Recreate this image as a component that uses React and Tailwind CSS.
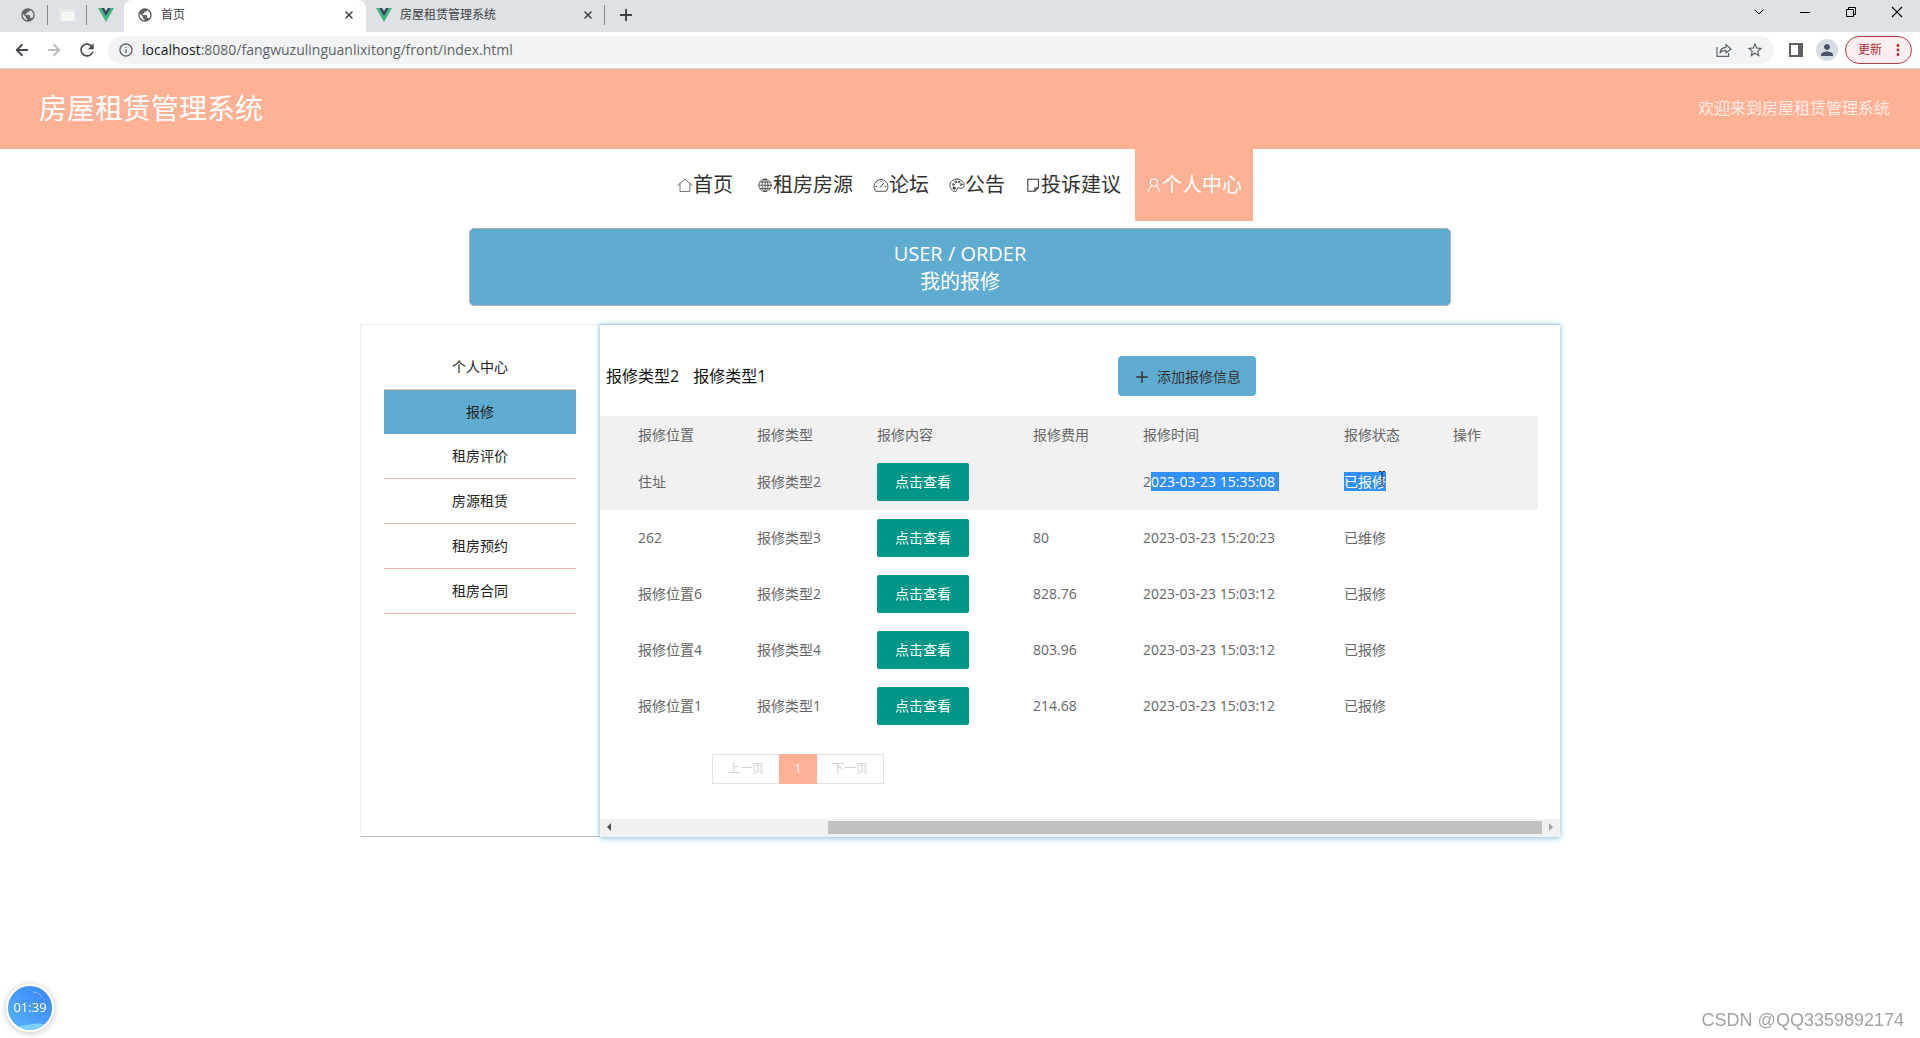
import React from 'react';
import { ArrowLeft, ArrowRight, ChevronDown, Plus, X } from 'lucide-react';
import { MdPublic, MdRefresh, MdStarOutline, MdPerson, MdMoreVert, MdInfoOutline } from 'react-icons/md';

const menu = ['个人中心', '报修', '租房评价', '房源租赁', '租房预约', '租房合同'];

const rows = [
  { place: '住址', type: '报修类型2', cost: '', time: '2023-03-23 15:35:08', status: '已报修', selected: true },
  { place: '262', type: '报修类型3', cost: '80', time: '2023-03-23 15:20:23', status: '已维修' },
  { place: '报修位置6', type: '报修类型2', cost: '828.76', time: '2023-03-23 15:03:12', status: '已报修' },
  { place: '报修位置4', type: '报修类型4', cost: '803.96', time: '2023-03-23 15:03:12', status: '已报修' },
  { place: '报修位置1', type: '报修类型1', cost: '214.68', time: '2023-03-23 15:03:12', status: '已报修' },
];

function NavIcon({ children }) {
  return (
    <svg className="w-4 h-4 shrink-0" viewBox="0 0 17 17" fill="none" stroke="currentColor" strokeWidth="0.9" strokeLinejoin="round" strokeLinecap="round">
      {children}
    </svg>
  );
}

const navItems = [
  {
    label: '首页',
    icon: (
      <g strokeWidth="0.7">
        <path d="M0.8 9 8.4 2.4 16 9" />
        <path d="M3.2 7v8.400h10.400V7" />
      </g>
    ),
  },
  {
    label: '租房房源',
    icon: (
      <g strokeWidth="0.8">
        <circle cx="8.5" cy="8.8" r="6.6" />
        <ellipse cx="8.5" cy="8.8" rx="3.2" ry="6.6" />
        <path d="M8.5 2.2v13.200M1.900 8.800h13.200M3.100 5.400h10.800M3.100 12.200h10.800" />
      </g>
    ),
  },
  {
    label: '论坛',
    icon: (
      <g>
        <path d="M2.600 14.800A7.500 7.500 0 1 1 14.400 14.800Z" />
        <path d="M7.800 10.800 11.400 6.400M2.800 10h1M8.500 4.200v.6M13 10h1M4.600 6l.5.5" />
      </g>
    ),
  },
  {
    label: '公告',
    icon: (
      <g>
        <path d="M8.600 2.200C4.400 2.200 1 5 1 8.800S3.800 15.400 6.400 15.400c2.400 0 1.600-2.600 2.600-3.600 1.600-1.400 3.400 1.200 5.600 0 1.200-.8 1.700-2 1.500-3.400-.4-3.400-3.500-6.200-7.500-6.200Z" />
        <circle cx="4.600" cy="8" r="1" />
        <circle cx="7" cy="5.200" r="1" />
        <circle cx="10.600" cy="5.200" r="1" />
        <circle cx="13" cy="8" r="1" />
        <circle cx="5.400" cy="11.800" r="1.200" fill="currentColor" />
      </g>
    ),
  },
  {
    label: '投诉建议',
    icon: (
      <g strokeWidth="1.100">
        <path d="M10.500 15.200H3V2.400h11.200v9.200l-3.700 3.600v-3.400h3.700" />
      </g>
    ),
  },
  {
    label: '个人中心',
    active: true,
    icon: (
      <g strokeWidth="1.100">
        <circle cx="8.500" cy="6" r="3.800" />
        <path d="M2.800 15.400c0-3 1.600-5 3.900-6M14.200 15.400c0-3-1.600-5-3.900-6" />
      </g>
    ),
  },
];

function VueLogo() {
  return (
    <svg className="w-4 h-4 shrink-0" viewBox="0 0 16 16">
      <path d="M0 1h3.2L8 9.4 12.8 1H16L8 15Z" fill="#41b883" />
      <path d="M3.2 1h3L8 4.2 9.8 1h3L8 9.4Z" fill="#35495e" />
    </svg>
  );
}

function TabBar() {
  return (
    <div className="flex h-8 items-center bg-[#dee1e6] pb-0.5 text-[#3c4043]">
      <div className="flex w-[47px] justify-end pr-[11px]"><MdPublic className="w-4 h-4 text-[#5f6368]" /></div>
      <div className="w-px h-5 bg-[#85898d]" />
      <div className="flex w-[38px] justify-center">
        <svg className="w-4 h-4" viewBox="0 0 16 16">
          <path d="M0 2h16v12H0z" fill="#f4f6f5" />
          <path d="M0 2h16v3H0z" fill="#e6ebe8" />
          <path d="M0 5h2v9H0z" fill="#dfe9e2" />
        </svg>
      </div>
      <div className="w-px h-5 bg-[#85898d]" />
      <div className="flex w-[37px] justify-center"><VueLogo /></div>
      <div className="flex h-8 w-[242px] self-start items-center gap-2 rounded-t-lg bg-white pb-0.5 pl-[13px] pr-[11px]">
        <MdPublic className="w-4 h-4 text-[#5f6368]" />
        <span className="flex-1 text-xs">首页</span>
        <button aria-label="关闭标签页"><X className="w-3 h-3" strokeWidth={3} /></button>
      </div>
      <div className="flex w-[238px] items-center gap-2 pl-[10px] pr-[10px]">
        <VueLogo />
        <span className="flex-1 text-xs">房屋租赁管理系统</span>
        <button aria-label="关闭标签页"><X className="w-3 h-3" strokeWidth={3} /></button>
      </div>
      <div className="w-px h-5 bg-[#85898d]" />
      <button className="ml-3" aria-label="新建标签页"><Plus className="w-[18px] h-[18px]" strokeWidth={2.5} /></button>
      <div className="ml-auto flex h-6 items-center self-start gap-[30px] pr-[15px] text-black">
        <button aria-label="搜索标签页"><ChevronDown className="w-4 h-4" strokeWidth={1.5} /></button>
        <button aria-label="最小化">
          <svg className="w-4 h-4" viewBox="0 0 16 16"><path d="M3 8.5h10" stroke="currentColor" /></svg>
        </button>
        <button aria-label="还原">
          <svg className="w-4 h-4" viewBox="0 0 16 16" fill="none" stroke="currentColor"><path d="M3.5 5.5h7v7h-7zM5.5 5.5v-2h7v7h-2" /></svg>
        </button>
        <button aria-label="关闭">
          <svg className="w-4 h-4" viewBox="0 0 16 16"><path d="m3 3 10 10M13 3 3 13" stroke="currentColor" strokeWidth="1.1" /></svg>
        </button>
      </div>
    </div>
  );
}

function Toolbar() {
  return (
    <div className="flex h-[37px] items-center border-b border-[#d5d5d8] bg-white pl-[13px] pr-2 text-[#5f6368]">
      <div className="flex gap-3.5">
        <button aria-label="后退"><ArrowLeft className="w-[18px] h-[18px] text-[#45484c]" strokeWidth={2.4} /></button>
        <button aria-label="前进"><ArrowRight className="w-[18px] h-[18px] text-[#b9bbbe]" strokeWidth={2.4} /></button>
        <button aria-label="重新加载"><MdRefresh className="w-5 h-5 text-[#45484c]" /></button>
      </div>
      <div className="ml-[11px] flex h-7 flex-1 items-center rounded-full bg-[#f1f3f4] px-2.5">
        <MdInfoOutline className="w-4 h-4" />
        <a href="#" className="ml-2 flex-1 text-sm text-[#5f6368]">
          <span className="text-[#202124]">localhost</span>:8080/fangwuzulinguanlixitong/front/index.html
        </a>
        <button aria-label="分享">
          <svg className="w-4 h-4" viewBox="0 0 16 16" fill="none" stroke="currentColor" strokeWidth="1.2" strokeLinejoin="round">
            <path d="M1 5v9.4h11.600V11" />
            <path d="M4 11c.4-3.600 2.800-5.400 6-5.600V2.600L15 7l-5 4V8.400C7.400 8.400 5.400 9.200 4 11Z" />
          </svg>
        </button>
        <button className="ml-3.5" aria-label="收藏"><MdStarOutline className="w-[18px] h-[18px]" /></button>
      </div>
      <button className="ml-3.5" aria-label="侧边栏">
        <svg className="w-4 h-4" viewBox="0 0 16 16" fill="none"><path d="M2 2h12v12H2z" stroke="currentColor" strokeWidth="2" /><path d="M10 2h5v12h-5z" fill="currentColor" /></svg>
      </button>
      <button className="ml-3 flex h-[22px] w-[22px] items-center justify-center rounded-full bg-[#d8dce3]" aria-label="用户">
        <MdPerson className="w-[18px] h-[18px] text-[#4b5468]" />
      </button>
      <button className="ml-[7px] flex h-7 w-[67px] items-center justify-between rounded-full border border-[#b3404a] bg-[#fceeee] pl-3 pr-1 text-xs text-[#b3303a]">
        更新
        <MdMoreVert className="w-[18px] h-[18px]" />
      </button>
    </div>
  );
}

function Sidebar() {
  return (
    <aside className="w-60 shrink-0 border border-[#f0f0f0] border-b-[#b9b9b9] px-[23px] pt-5">
      {menu.map((item) => (
        <a
          key={item}
          href="#"
          className={
            item === '报修'
              ? 'block h-11 bg-[#60acd0] text-center text-sm leading-[44px] text-[#222]'
              : 'block h-[45px] border-b border-[#eab5a5] text-center text-sm leading-[44px] text-[#222]'
          }
        >
          {item}
        </a>
      ))}
    </aside>
  );
}

function RepairTable() {
  return (
    <table className="w-full table-fixed text-left text-sm text-[#666]">
      <colgroup>
        <col className="w-[142px]" />
        <col className="w-[120px]" />
        <col className="w-[156px]" />
        <col className="w-[110px]" />
        <col className="w-[201px]" />
        <col className="w-[109px]" />
        <col />
      </colgroup>
      <thead>
        <tr className="h-[38px] bg-[#f1f1f1]">
          <th className="pl-[38px] font-normal">报修位置</th>
          <th className="pl-[15px] font-normal">报修类型</th>
          <th className="pl-[15px] font-normal">报修内容</th>
          <th className="pl-[15px] font-normal">报修费用</th>
          <th className="pl-[15px] font-normal">报修时间</th>
          <th className="pl-[15px] font-normal">报修状态</th>
          <th className="pl-[15px] font-normal">操作</th>
        </tr>
      </thead>
      <tbody>
        {rows.map((row) => (
          <tr key={row.place} className={row.selected ? 'h-14 bg-[#f1f1f1]' : 'h-14'}>
            <td className="pl-[38px]">{row.place}</td>
            <td className="pl-[15px]">{row.type}</td>
            <td className="pl-[15px]">
              <button className="block h-[38px] w-[92px] rounded-xs bg-[#009688] text-white">点击查看</button>
            </td>
            <td className="pl-[15px]">{row.cost}</td>
            <td className="pl-[15px] whitespace-nowrap">
              {row.selected ? (
                <>2<span className="bg-[#3390ff] pr-1 text-white">{row.time.slice(1)}</span></>
              ) : row.time}
            </td>
            <td className="pl-[15px]">
              {row.selected ? (
                <span className="relative bg-[#3390ff] text-white">
                  {row.status}
                  {/* text cursor */}
                  <svg className="absolute right-0 -top-px h-4 w-2" viewBox="0 0 8 16" fill="none" stroke="#222">
                    <path d="M1 .5h2.500M4.500 .5H7M4 1v13M1 15h2.500M4.500 15H7" />
                  </svg>
                </span>
              ) : row.status}
            </td>
            <td></td>
          </tr>
        ))}
      </tbody>
    </table>
  );
}

export default function App() {
  return (
    <div className="min-h-screen bg-white font-['Open_Sans','Noto_Sans_CJK_SC',sans-serif]">
      {/* Browser chrome */}
      <TabBar />
      <Toolbar />

      {/* Header */}
      <header className="flex h-20 items-center justify-between bg-[#ffb196] pb-0.5 pl-[39px] pr-[30px]">
        <h1 className="text-[28px] text-white">房屋租赁管理系统</h1>
        <span className="text-base text-white/75">欢迎来到房屋租赁管理系统</span>
      </header>

      {/* Main menu */}
      <nav className="flex h-[72px] justify-center">
        {navItems.map((item) => (
          <a
            key={item.label}
            href="#"
            className={
              item.active
                ? 'ml-1 flex items-center bg-[#ffb196] px-[11px] text-xl text-white'
                : 'flex items-center px-2.5 text-xl text-[#333] first:mr-1'
            }
          >
            <NavIcon>{item.icon}</NavIcon>
            {item.label}
          </a>
        ))}
      </nav>

      {/* Banner */}
      <div className="mx-auto mt-[7px] max-w-[982px] rounded-[5px] border border-[#a9b4ba] bg-[#60acd0] pt-[11px] pb-[9px] text-center text-xl text-white">
        <p>USER / ORDER</p>
        <p>我的报修</p>
      </div>

      <main className="mx-auto mt-[18px] flex max-w-[1200px]">
        <Sidebar />
        <section className="min-w-0 flex-1 border-t border-[#b4d6e2] bg-white shadow-[0_1px_6px_#7dbdd4]">
          <div className="pr-[22px]">
            <div className="flex items-center pt-[31px] pl-1.5">
              <div className="flex flex-1 gap-3.5 text-base text-[#111]">
                <a href="#">报修类型2</a>
                <a href="#">报修类型1</a>
              </div>
              <div className="w-[420px]">
                <button className="flex h-10 items-center gap-1.5 rounded bg-[#60acd0] pt-0.5 pl-[15px] pr-[15px] text-sm text-[#333]">
                  <Plus className="w-[18px] h-[18px]" strokeWidth={2} />
                  添加报修信息
                </button>
              </div>
            </div>
            <div className="mt-5"><RepairTable /></div>
          </div>

          {/* Pagination */}
          <div className="mt-5 ml-28 flex h-[30px] w-max text-xs text-[#d2d2d2]">
            <button className="w-[67px] border border-r-0 border-[#e2e2e2]">上一页</button>
            <button className="w-[38px] bg-[#ffb196] text-white">1</button>
            <button className="w-[67px] border border-l-0 border-[#e2e2e2]">下一页</button>
          </div>

          {/* Horizontal scroll bar */}
          <div className="mt-[35px] flex h-[18px] items-center bg-[#f1f1f1] pb-0.5">
            <svg className="w-[18px] h-[18px] shrink-0" viewBox="0 0 18 18"><path d="M11 5v8L7 9Z" fill="#505050" /></svg>
            <div className="flex flex-1 justify-end"><div className="h-[13px] w-[77.3%] bg-[#c1c1c1]" /></div>
            <svg className="w-[18px] h-[18px] shrink-0" viewBox="0 0 18 18"><path d="M7 5v8l4-4Z" fill="#a3a3a3" /></svg>
          </div>
        </section>
      </main>

      {/* Recording timer */}
      <div className="fixed bottom-1.5 left-1.5 flex h-12 w-12 items-center justify-center overflow-hidden rounded-full border-2 border-white bg-linear-to-tr from-[#58b4fb] to-[#3a83f6] text-[13px] text-white shadow-[0_1px_6px_rgba(0,0,0,0.25)]">
        <svg className="absolute inset-0 h-full w-full" viewBox="0 0 44 44" fill="none">
          <path d="M8 40c10 0 18-4 28-2l-4 6H12Z" fill="#7fd0fb" />
          <path d="M25 6c4 0 7 2 9 5" stroke="#8fc4fc" strokeDasharray="4 1" />
        </svg>
        <span className="relative">01:39</span>
      </div>

      <div className="fixed bottom-1.5 right-4 font-['Liberation_Sans',sans-serif] text-lg leading-6 text-[#a3a3a3]">CSDN @QQ3359892174</div>
    </div>
  );
}
